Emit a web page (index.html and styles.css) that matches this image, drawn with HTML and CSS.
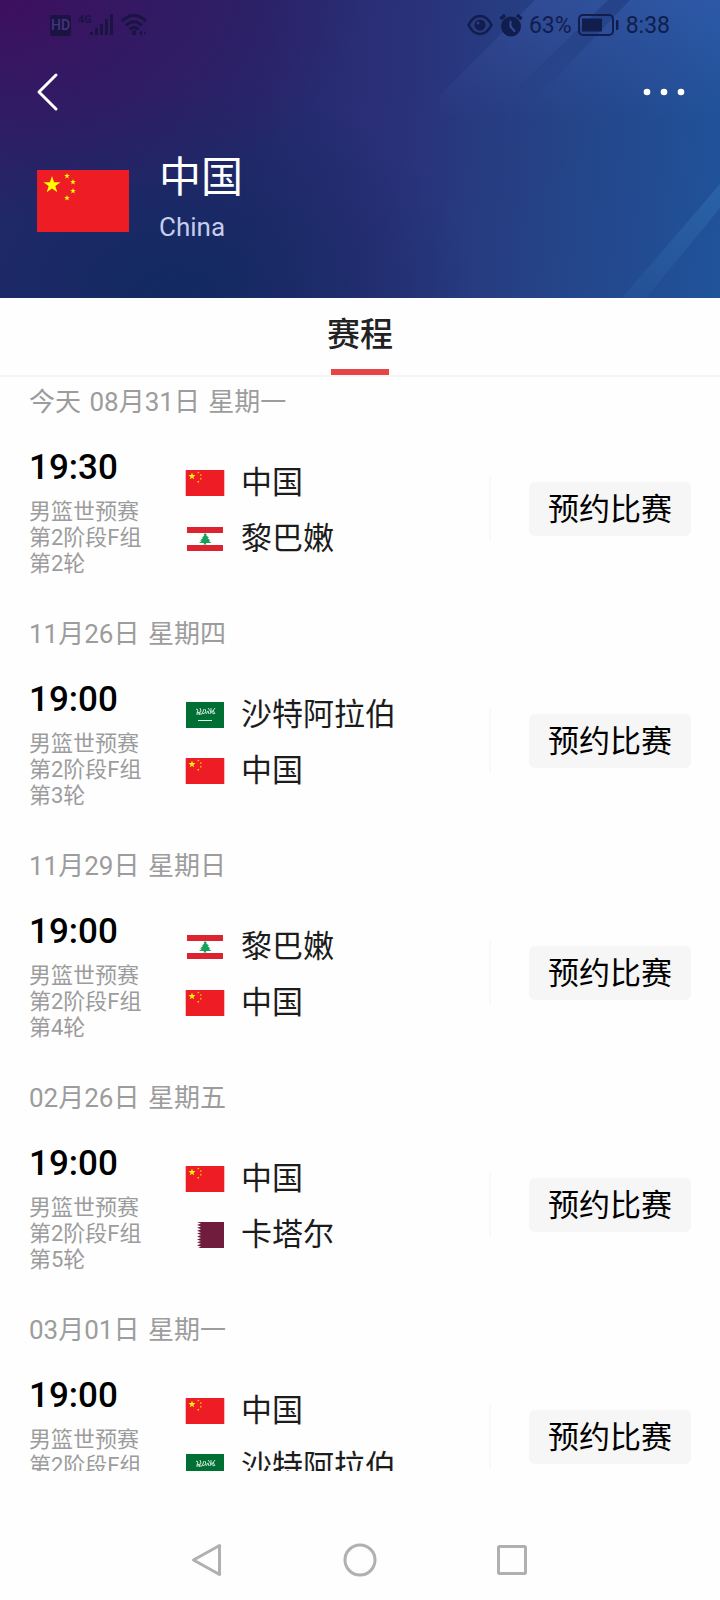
FILE: index.html
```html
<!DOCTYPE html>
<html lang="zh-CN">
<head>
  <meta charset="UTF-8">
  <meta name="viewport" content="width=device-width, initial-scale=1.0">
  <title>中国 - 赛程</title>
  <link rel="stylesheet" href="styles.css">
</head>
<body>
  <!-- Flags -->
  <svg class="defs" aria-hidden="true">
    <symbol id="star" viewBox="-10 -10 20 20">
      <path d="M0-10 2.3-3.1H9.5L3.7 1.2 5.9 8.1 0 3.8-5.9 8.1-3.7 1.2-9.5-3.1H-2.3z"/>
    </symbol>
    <symbol id="flag-cn" viewBox="0 0 92 62">
      <path fill="#ee1c25" d="M0 0h92v62H0z"/>
      <g fill="#ff0">
        <use href="#star" x="6" y="6" width="18" height="18"/>
        <use href="#star" x="27" y="3" width="6" height="6"/>
        <use href="#star" x="33" y="9" width="6" height="6"/>
        <use href="#star" x="33" y="18" width="6" height="6"/>
        <use href="#star" x="27" y="25" width="6" height="6"/>
      </g>
    </symbol>
    <symbol id="flag-lb" viewBox="0 0 40 26">
      <path fill="#fff" d="M2 1h36v24H2z"/>
      <path fill="#dc2430" d="M2 1h36v6H2zM2 19h36v6H2z"/>
      <path fill="#12a25c" d="M20 7l2 2-1 .5 3 2-1.500.5 3 2.500-2 .3 3 2.200h-5.500l.5 1.500h-3l.5-1.500h-5l3-2.200-2-.3 3-2.500-1-.5 2.500-2-1-.5z"/>
    </symbol>
    <symbol id="flag-sa" viewBox="0 0 40 26">
      <path fill="#006f34" d="M1 0h38v26H1z"/>
      <path fill="none" stroke="#cfe5d8" stroke-width="1" d="M11 7l2 1-1 3 3-1M11 12h4M15 6l1 3-2 3h3l2-5M18 12l3-2-1-3M21 12l2-3 1 3M23 6l3 4-1 2M26 6v4l3 2M30 6l-3 4M28 8l2 4"/>
      <path stroke="#e8f3ec" stroke-width="1" d="M13 18.500h14"/>
    </symbol>
    <symbol id="flag-qa" viewBox="0 0 40 26">
      <path fill="#701c3d" d="M39 0H12l4 1.500-4 1.400 4 1.500-4 1.400 4 1.500-4 1.400 4 1.500-4 1.400 4 1.500-4 1.400 4 1.500-4 1.400 4 1.500-4 1.400 4 1.500-4 1.400 4 1.500-3 1.300h26z"/>
    </symbol>
  </svg>

  <header class="header">
    <svg class="header-bg" viewBox="0 0 720 298" preserveAspectRatio="none" aria-hidden="true">
      <defs>
        <linearGradient id="shine" x1="0" y1="0" x2="0" y2="1">
          <stop offset="0" stop-color="#5c7be0" stop-opacity=".2"/>
          <stop offset="1" stop-color="#5c7be0" stop-opacity="0"/>
        </linearGradient>
        <linearGradient id="shade" x1="0" y1="0" x2="0" y2="1">
          <stop offset="0" stop-color="#10205c" stop-opacity=".3"/>
          <stop offset="1" stop-color="#10205c" stop-opacity="0"/>
        </linearGradient>
        <linearGradient id="streak" x1="0" y1="0" x2="0" y2="1">
          <stop offset="0" stop-color="#3c7fc0" stop-opacity=".35"/>
          <stop offset="1" stop-color="#3c7fc0" stop-opacity=".1"/>
        </linearGradient>
      </defs>
      <path fill="url(#shine)" d="M535 0H720V120H440V95z"/>
      <path fill="url(#shade)" d="M608 0H630L535 100H505z"/>
      <path fill="url(#streak)" d="M720 184V208L646 298H622z"/>
    </svg>

    <div class="status">
      <div class="status-left">
        <span class="hd">HD</span>
        <span class="net">4G</span>
        <svg class="signal" viewBox="0 0 24 22" aria-hidden="true">
          <path d="M0 18h3v3H0zM5 14h3v7H5zM10 10h3v11h-3zM15 5h3v16h-3zM20 0h3v21h-3z"/>
        </svg>
        <svg class="wifi" viewBox="0 0 26 22" aria-hidden="true">
          <path fill="none" stroke="#1a1443" stroke-width="3" d="M1 7Q13-4 25 7M5 11.500Q13 4 21 11.500M8.500 15.500Q13 11.500 17.500 15.500"/>
          <circle cx="13" cy="19" r="2.400"/>
          <path d="M18 19l3-3v6zM23 17l2 2-2 2z"/>
        </svg>
      </div>
      <div class="status-right">
        <svg class="eye" viewBox="0 0 26 22" aria-hidden="true">
          <path fill="none" stroke="#111d4c" stroke-width="2.500" d="M1.500 11Q6 2 13 2t11.500 9Q20 20 13 20T1.500 11z"/>
          <circle cx="13" cy="11" r="5.500"/>
          <circle cx="11" cy="9" r="1.500" fill="#2e3d85"/>
        </svg>
        <svg class="alarm" viewBox="0 0 24 24" aria-hidden="true">
          <circle cx="12" cy="13.500" r="10"/>
          <path fill="none" stroke="#111d4c" stroke-width="3.500" d="M1.500 6 6 2M22.500 6 18 2"/>
          <path fill="none" stroke="#34479a" stroke-width="2" stroke-linecap="round" d="M11.500 8.500v5l4 4.500"/>
        </svg>
        <span>63%</span>
        <svg class="battery" viewBox="0 0 42 22" aria-hidden="true">
          <rect x="1" y="1" width="34" height="20" rx="4" fill="none" stroke="#111d4c" stroke-width="2"/>
          <path d="M4 4.500h20v13H4zM38 6h1.500l1 1v8l-1 1H38z"/>
        </svg>
        <span>8:38</span>
      </div>
    </div>

    <div class="nav">
      <button class="icon-btn" aria-label="返回">
        <svg width="24" height="40" viewBox="0 0 24 40"><path fill="none" stroke="#fff" stroke-width="3" stroke-linecap="round" stroke-linejoin="round" d="M21 3 4 20l17 17"/></svg>
      </button>
      <button class="icon-btn" aria-label="更多">
        <svg width="42" height="8" viewBox="0 0 42 8" fill="#fff"><circle cx="4" cy="4" r="3.300"/><circle cx="21" cy="4" r="3.300"/><circle cx="38" cy="4" r="3.300"/></svg>
      </button>
    </div>

    <div class="team">
      <svg class="team-flag" aria-hidden="true"><use href="#flag-cn"/></svg>
      <div>
        <h1>中国</h1>
        <p>China</p>
      </div>
    </div>
  </header>

  <nav class="tabs">
    <a class="tab" href="#schedule">赛程</a>
  </nav>

  <main class="list" id="schedule">
    <section class="day">
      <h2><span>今天</span> <span>08月31日</span> 星期一</h2>
      <div class="match">
        <div class="info">
          <div class="time">19:30</div>
          <p>男篮世预赛<br>第2阶段F组<br>第2轮</p>
        </div>
        <div class="sides">
          <div class="side"><svg class="flag"><use href="#flag-cn"/></svg>中国</div>
          <div class="side"><svg class="flag"><use href="#flag-lb"/></svg>黎巴嫩</div>
        </div>
        <div class="action"><button class="book">预约比赛</button></div>
      </div>
    </section>

    <section class="day">
      <h2><span>11月26日</span> 星期四</h2>
      <div class="match">
        <div class="info">
          <div class="time">19:00</div>
          <p>男篮世预赛<br>第2阶段F组<br>第3轮</p>
        </div>
        <div class="sides">
          <div class="side"><svg class="flag"><use href="#flag-sa"/></svg>沙特阿拉伯</div>
          <div class="side"><svg class="flag"><use href="#flag-cn"/></svg>中国</div>
        </div>
        <div class="action"><button class="book">预约比赛</button></div>
      </div>
    </section>

    <section class="day">
      <h2><span>11月29日</span> 星期日</h2>
      <div class="match">
        <div class="info">
          <div class="time">19:00</div>
          <p>男篮世预赛<br>第2阶段F组<br>第4轮</p>
        </div>
        <div class="sides">
          <div class="side"><svg class="flag"><use href="#flag-lb"/></svg>黎巴嫩</div>
          <div class="side"><svg class="flag"><use href="#flag-cn"/></svg>中国</div>
        </div>
        <div class="action"><button class="book">预约比赛</button></div>
      </div>
    </section>

    <section class="day">
      <h2><span>02月26日</span> 星期五</h2>
      <div class="match">
        <div class="info">
          <div class="time">19:00</div>
          <p>男篮世预赛<br>第2阶段F组<br>第5轮</p>
        </div>
        <div class="sides">
          <div class="side"><svg class="flag"><use href="#flag-cn"/></svg>中国</div>
          <div class="side"><svg class="flag"><use href="#flag-qa"/></svg>卡塔尔</div>
        </div>
        <div class="action"><button class="book">预约比赛</button></div>
      </div>
    </section>

    <section class="day">
      <h2><span>03月01日</span> 星期一</h2>
      <div class="match">
        <div class="info">
          <div class="time">19:00</div>
          <p>男篮世预赛<br>第2阶段F组</p>
        </div>
        <div class="sides">
          <div class="side"><svg class="flag"><use href="#flag-cn"/></svg>中国</div>
          <div class="side"><svg class="flag"><use href="#flag-sa"/></svg>沙特阿拉伯</div>
        </div>
        <div class="action"><button class="book">预约比赛</button></div>
      </div>
    </section>
  </main>

  <!-- System navigation -->
  <footer class="sysbar">
    <button class="icon-btn" aria-label="后退">
      <svg width="34" height="34" viewBox="0 0 34 34"><path d="M28.500 2.500v29L2.500 17z"/></svg>
    </button>
    <button class="icon-btn" aria-label="主页">
      <svg width="34" height="34" viewBox="0 0 34 34"><circle cx="17" cy="17" r="15"/></svg>
    </button>
    <button class="icon-btn" aria-label="最近任务">
      <svg width="34" height="34" viewBox="0 0 34 34"><rect x="3.500" y="3.500" width="27" height="27" rx="1"/></svg>
    </button>
  </footer>
</body>
</html>
```

FILE: styles.css
```css
* {
  margin: 0;
  padding: 0;
  box-sizing: border-box;
}
body {
  height: 100vh;
  display: flex;
  flex-direction: column;
  background-color: #fefefe;
  font-family: Roboto, "Noto Sans CJK SC", sans-serif;
  color: #1c1c1c;
}
button {
  border: none;
  background: none;
  font-family: inherit;
  cursor: pointer;
}
.defs {
  position: absolute;
  width: 0;
  height: 0;
}
.icon-btn {
  display: flex;
  align-items: center;
  justify-content: center;
}

/* Header */
.header {
  position: relative;
  flex-shrink: 0;
  height: 298px;
  background:
    radial-gradient(ellipse 50% 75% at 0 0, #3d0f5e, rgba(61, 15, 94, 0)),
    radial-gradient(ellipse 42% 75% at 24% 100%, #122a61, rgba(18, 42, 97, 0)),
    linear-gradient(95deg, #25286c 0%, #25286c 35%, #2a2f77 52%, #264084 72%, #20539a 100%);
}
.header-bg {
  position: absolute;
  top: 0;
  left: 0;
  width: 100%;
  height: 100%;
}
.status,
.nav,
.team {
  position: relative;
  display: flex;
  align-items: center;
}
.status {
  height: 50px;
  padding: 0 50px;
  justify-content: space-between;
  font-size: 23px;
  color: #111d4c;
}
.status-left,
.status-right {
  display: flex;
  align-items: center;
}
.status-left {
  color: #1a1443;
  fill: #1a1443;
}
.status-right {
  gap: 6px;
  fill: #111d4c;
}
.hd {
  width: 21px;
  height: 21px;
  border-radius: 3px;
  background-color: #1a1443;
  color: #47337e;
  font-size: 14px;
  font-weight: 500;
  line-height: 21px;
  text-align: center;
}
.net {
  align-self: flex-start;
  width: 12px;
  margin-left: 7px;
  font-size: 11px;
  line-height: 11px;
  font-weight: 700;
}
.signal {
  width: 24px;
  height: 22px;
}
.wifi {
  width: 26px;
  height: 22px;
  margin-left: 7px;
}
.eye {
  width: 26px;
  height: 22px;
}
.alarm {
  width: 24px;
  height: 24px;
}
.battery {
  width: 42px;
  height: 22px;
}
.nav {
  height: 84px;
  padding: 0 35px;
  justify-content: space-between;
}
.team {
  padding: 18px 37px;
  gap: 30px;
}
.team-flag {
  width: 92px;
  height: 62px;
}
.team h1 {
  font-size: 42px;
  line-height: 52px;
  font-weight: 400;
  color: #fff;
}
.team p {
  font-size: 26px;
  line-height: 46px;
  color: #c5cdea;
}

/* Tabs */
.tabs {
  flex-shrink: 0;
  display: flex;
  justify-content: center;
  height: 79px;
  border-bottom: 2px solid #f4f4f4;
}
.tab {
  display: flex;
  flex-direction: column;
  align-items: center;
  justify-content: space-between;
  padding-top: 2px;
  font-size: 33px;
  line-height: 69px;
  font-weight: 500;
  color: #222;
  text-decoration: none;
}
.tab::after {
  content: "";
  width: 58px;
  height: 6px;
  background-color: #e64545;
}

/* Match list */
.list {
  flex: 1;
  overflow: hidden;
}
.day h2 {
  padding: 0 29px;
  font-size: 26px;
  line-height: 50px;
  font-weight: 400;
  color: #9c9c9c;
}
.day h2 span {
  margin-right: 2px;
}
.match {
  display: flex;
  align-items: center;
  padding: 21px 29px 32px;
}
.info {
  width: 156px;
  min-height: 129px;
}
.time {
  margin-bottom: 11px;
  font-size: 35px;
  line-height: 40px;
  font-weight: 500;
  color: #000;
}
.info p {
  font-size: 22px;
  line-height: 26px;
  color: #9c9c9c;
}
.sides {
  flex: 1;
  margin-bottom: 4px;
}
.side {
  display: flex;
  align-items: center;
  gap: 16px;
  font-size: 31px;
  line-height: 56px;
}
.flag {
  width: 40px;
  height: 26px;
}
.action {
  display: flex;
  align-items: center;
  height: 64px;
  margin-bottom: 7px;
  padding-left: 38px;
  border-left: 2px solid #f8f8f8;
}
.book {
  width: 162px;
  height: 54px;
  padding-bottom: 6px;
  border-radius: 6px;
  background-color: #f6f6f6;
  font-size: 31px;
  color: #000;
}
.book:hover {
  background-color: #eee;
}

/* System navigation */
.sysbar {
  flex-shrink: 0;
  display: flex;
  justify-content: center;
  gap: 118px;
  height: 129px;
  padding-top: 49px;
}
.sysbar .icon-btn {
  height: 80px;
}
.sysbar svg {
  fill: none;
  stroke: #b0b0b0;
  stroke-width: 3;
  stroke-linejoin: round;
}
```
